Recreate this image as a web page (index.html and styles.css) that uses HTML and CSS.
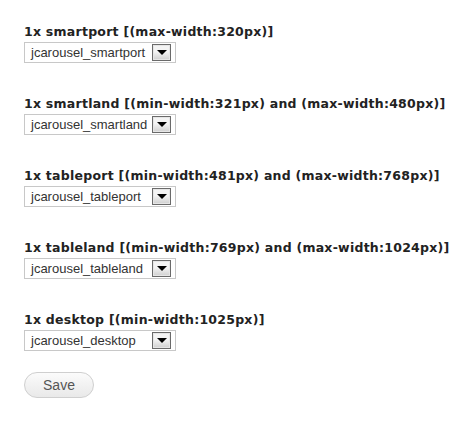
FILE: index.html
```html
<!DOCTYPE html>
<html>
<head>
<meta charset="utf-8">
<link rel="stylesheet" href="styles.css">
</head>
<body>
<form class="form">
  <div class="field">
    <label class="label">1x smartport [(max-width:320px)]</label>
    <div class="select"><span class="select-text">jcarousel_smartport</span><span class="arrow"></span></div>
  </div>
  <div class="field">
    <label class="label">1x smartland [(min-width:321px) and (max-width:480px)]</label>
    <div class="select"><span class="select-text">jcarousel_smartland</span><span class="arrow"></span></div>
  </div>
  <div class="field">
    <label class="label">1x tableport [(min-width:481px) and (max-width:768px)]</label>
    <div class="select"><span class="select-text">jcarousel_tableport</span><span class="arrow"></span></div>
  </div>
  <div class="field">
    <label class="label">1x tableland [(min-width:769px) and (max-width:1024px)]</label>
    <div class="select"><span class="select-text">jcarousel_tableland</span><span class="arrow"></span></div>
  </div>
  <div class="field">
    <label class="label">1x desktop [(min-width:1025px)]</label>
    <div class="select"><span class="select-text">jcarousel_desktop</span><span class="arrow"></span></div>
  </div>
  <button type="button" class="save">Save</button>
</form>
</body>
</html>
```
FILE: styles.css
```css
html, body {
  margin: 0;
  padding: 0;
  background: #ffffff;
}
.form {
  padding: 24px 0 0 24px;
  display: flex;
  flex-direction: column;
  align-items: flex-start;
}
.field {
  display: flex;
  flex-direction: column;
  align-items: flex-start;
  gap: 2px;
  margin-bottom: 33px;
}
.field:nth-child(5) {
  margin-bottom: 21px;
}
.label {
  font-family: "DejaVu Sans", sans-serif;
  font-weight: bold;
  font-size: 12.5px;
  line-height: 16px;
  color: #222222;
  letter-spacing: 0.25px;
}
.select {
  box-sizing: border-box;
  width: 152px;
  height: 21px;
  border: 1px solid #c8c8c8;
  background: #ffffff;
  display: flex;
  align-items: center;
  justify-content: space-between;
  padding: 0 4px 0 6px;
  font-family: "Liberation Sans", Arial, sans-serif;
  font-size: 13px;
  color: #333333;
}
.select-text {
  white-space: nowrap;
}
.arrow {
  box-sizing: border-box;
  width: 19px;
  height: 17px;
  border: 1px solid #6a6a6a;
  outline: 1px solid #e6e6e6;
  outline-offset: -2px;
  background: linear-gradient(#f4f4f4, #f4f4f4 45%, #cfcfcf);
  display: flex;
  align-items: center;
  justify-content: center;
  flex: none;
}
.arrow::after {
  content: "";
  width: 0;
  height: 0;
  border-left: 5px solid transparent;
  border-right: 5px solid transparent;
  border-top: 5px solid #000000;
  margin-top: -1px;
}
.save {
  box-sizing: border-box;
  width: 70px;
  height: 26px;
  border: 1px solid #cfcfcf;
  border-radius: 13px;
  background: linear-gradient(#fbfbfb, #e9e9e9);
  font-family: "Liberation Sans", Arial, sans-serif;
  font-size: 14px;
  color: #555555;
  padding: 0;
}
```
